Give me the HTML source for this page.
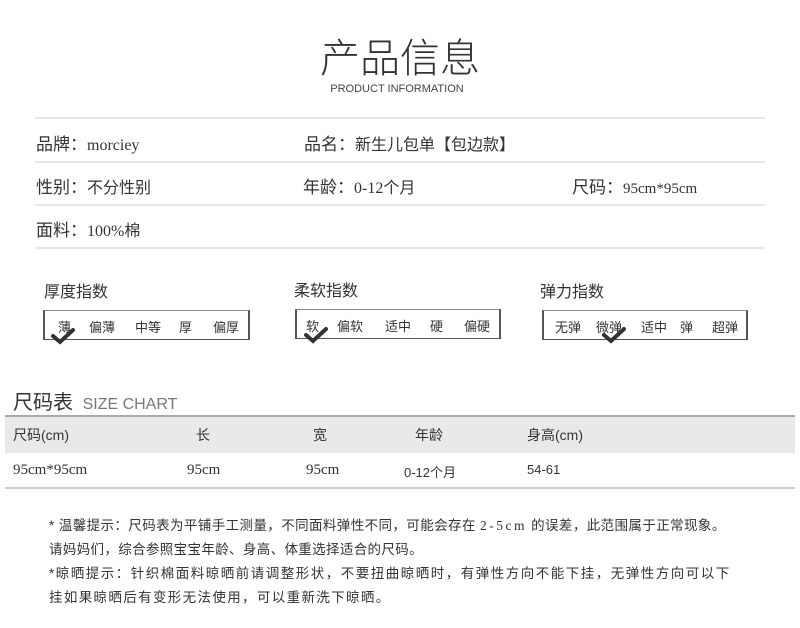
<!DOCTYPE html>
<html><head><meta charset="utf-8"><style>
*{margin:0;padding:0;box-sizing:border-box}
body{width:800px;height:628px;background:#fff;position:relative;overflow:hidden;font-family:"Liberation Sans","Noto Sans CJK SC",sans-serif;color:#333}
.a{position:absolute;white-space:nowrap}
.hl{position:absolute;left:35px;width:730px;height:2px;background:#e6e6e6}
.lab{font-size:17px;color:#333}
.ser{font-family:"Liberation Serif","Noto Serif CJK SC",serif}
.box{position:absolute;height:30px;border:1px solid #555;border-left-width:2px;border-right-width:2px;border-top-color:#888;font-size:13px;color:#333}
.box span{position:absolute;top:6px}
.chk{position:absolute}
.tr{font-size:14px}
.n{position:absolute;left:49px;font-size:13.5px;white-space:nowrap;color:#333}
</style></head><body>
<div class="a" style="left:0;width:800px;text-align:center;top:26px;font-size:40px;font-weight:300;color:#333">产品信息</div>
<div class="a" style="left:0;width:794px;text-align:center;top:83px;font-size:11px;color:#444">PRODUCT INFORMATION</div>
<div class="hl" style="top:117px"></div>
<div class="hl" style="top:161px"></div>
<div class="hl" style="top:204px"></div>
<div class="hl" style="top:247px"></div>
<div class="a lab" style="left:36px;top:130px">品牌：<span class="ser" style="font-size:16px">morciey</span></div>
<div class="a lab" style="left:304px;top:130px">品名：<span style="font-size:16px">新生儿包单【包边款】</span></div>
<div class="a lab" style="left:36px;top:173px">性别：<span style="font-size:16px">不分性别</span></div>
<div class="a lab" style="left:303px;top:173px">年龄：<span class="ser" style="font-size:16px">0-12</span><span style="font-size:16px">个月</span></div>
<div class="a lab" style="left:572px;top:173px">尺码：<span class="ser" style="font-size:15px">95cm*95cm</span></div>
<div class="a lab" style="left:36px;top:216px">面料：<span class="ser" style="font-size:16px">100%</span><span style="font-size:16px">棉</span></div>

<div class="a" style="left:44px;top:278px;font-size:16px">厚度指数</div>
<div class="a" style="left:294px;top:277px;font-size:16px">柔软指数</div>
<div class="a" style="left:540px;top:278px;font-size:16px">弹力指数</div>

<div class="box" style="left:43px;top:310px;width:207px"><span style="left:13px">薄</span><span style="left:44px">偏薄</span><span style="left:90px">中等</span><span style="left:134px">厚</span><span style="left:168px">偏厚</span></div>
<div class="box" style="left:295px;top:309px;width:206px"><span style="left:9px">软</span><span style="left:40px">偏软</span><span style="left:88px">适中</span><span style="left:133px">硬</span><span style="left:167px">偏硬</span></div>
<div class="box" style="left:542px;top:310px;width:206px"><span style="left:11px">无弹</span><span style="left:52px">微弹</span><span style="left:97px">适中</span><span style="left:136px">弹</span><span style="left:168px">超弹</span></div>
<svg class="chk" style="left:50px;top:327px" width="26" height="18"><path d="M3 9 L10 15 L23 3" stroke="#333" stroke-width="4" fill="none" stroke-linecap="round"/></svg>
<svg class="chk" style="left:303px;top:326px" width="26" height="18"><path d="M3 9 L10 15 L23 3" stroke="#333" stroke-width="4" fill="none" stroke-linecap="round"/></svg>
<svg class="chk" style="left:601px;top:326px" width="26" height="18"><path d="M3 9 L10 15 L23 3" stroke="#333" stroke-width="4" fill="none" stroke-linecap="round"/></svg>

<div class="a" style="left:13px;top:386px;font-size:20px;color:#333">尺码表 <span style="font-size:16px;color:#777;margin-left:4px">SIZE CHART</span></div>
<div class="a" style="left:5px;top:415px;width:790px;height:38px;background:#e9e9e9;border-top:2px solid #aaa"></div>
<div class="a tr" style="left:13px;top:425px">尺码(cm)</div>
<div class="a tr" style="left:196px;top:425px">长</div>
<div class="a tr" style="left:313px;top:425px">宽</div>
<div class="a tr" style="left:415px;top:425px">年龄</div>
<div class="a tr" style="left:527px;top:425px">身高(cm)</div>
<div class="a ser" style="left:13px;top:462px;font-size:15px">95cm*95cm</div>
<div class="a ser" style="left:187px;top:462px;font-size:15px">95cm</div>
<div class="a ser" style="left:306px;top:462px;font-size:15px">95cm</div>
<div class="a" style="left:404px;top:462px;font-size:13px">0-12个月</div>
<div class="a" style="left:527px;top:462px;font-size:13px">54-61</div>
<div class="a" style="left:5px;top:487px;width:790px;height:2px;background:#ccc"></div>

<div class="n" style="top:514px;letter-spacing:0.4px">* 温馨提示：尺码表为平铺手工测量，不同面料弹性不同，可能会存在 <span class="ser" style="letter-spacing:2.5px">2-5cm</span> 的误差，此范围属于正常现象。</div>
<div class="n" style="top:538px;letter-spacing:0.35px">请妈妈们，综合参照宝宝年龄、身高、体重选择适合的尺码。</div>
<div class="n" style="top:562px;letter-spacing:1.5px">*晾晒提示：针织棉面料晾晒前请调整形状，不要扭曲晾晒时，有弹性方向不能下挂，无弹性方向可以下</div>
<div class="n" style="top:586px;letter-spacing:1.35px">挂如果晾晒后有变形无法使用，可以重新洗下晾晒。</div>
</body></html>
